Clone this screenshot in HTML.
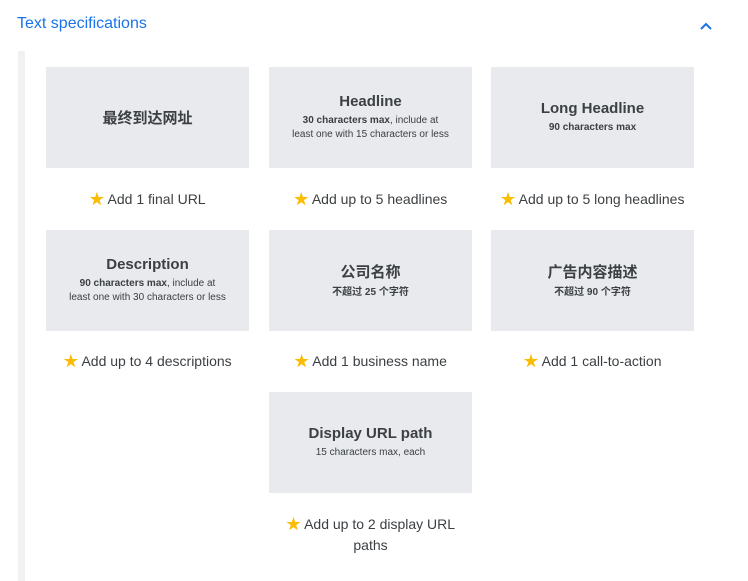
<!DOCTYPE html>
<html><head><meta charset="utf-8"><style>
body{margin:0;width:748px;height:569px;background:#fff;font-family:"Liberation Sans","Noto Sans CJK SC",sans-serif;color:#3c4043;position:relative;overflow:hidden}
.h{position:absolute;left:17px;top:15px;font-size:16px;color:#1a73e8}
.bar{position:absolute;left:18px;top:51px;width:7px;height:530px;background:#f1f1f1}
.box{position:absolute;width:203px;height:101px;background:#e8eaed;display:flex;flex-direction:column;justify-content:center;align-items:center;text-align:center}
.t{font-size:15px;font-weight:bold;color:#3c4043}
.s{font-size:10px;line-height:14px;margin-top:4px;color:#3c4043}
.cap{position:absolute;width:203px;text-align:center;font-size:14px;line-height:21px;color:#3c4043}
.st{color:#fbbc04;font-size:15px}
</style></head><body>
<div class="h">Text specifications</div>
<svg style="position:absolute;left:699px;top:21px" width="14" height="10" viewBox="0 0 14 10"><path d="M2 8 L7 3 L12 8" stroke="#1a73e8" stroke-width="2" fill="none"/></svg>
<div class="bar"></div>

<div class="box" style="left:46px;top:67px"><div class="t">最终到达网址</div></div>
<div class="box" style="left:269px;top:67px"><div class="t">Headline</div><div class="s"><b>30 characters max</b>, include at<br>least one with 15 characters or less</div></div>
<div class="box" style="left:491px;top:67px"><div class="t">Long Headline</div><div class="s"><b>90 characters max</b></div></div>
<div class="cap" style="left:46px;top:189px"><span class="st">★</span> Add 1 final URL</div>
<div class="cap" style="left:269px;top:189px"><span class="st">★</span> Add up to 5 headlines</div>
<div class="cap" style="left:491px;top:189px"><span class="st">★</span> Add up to 5 long headlines</div>

<div class="box" style="left:46px;top:230px"><div class="t">Description</div><div class="s"><b>90 characters max</b>, include at<br>least one with 30 characters or less</div></div>
<div class="box" style="left:269px;top:230px"><div class="t">公司名称</div><div class="s"><b>不超过 25 个字符</b></div></div>
<div class="box" style="left:491px;top:230px"><div class="t">广告内容描述</div><div class="s"><b>不超过 90 个字符</b></div></div>
<div class="cap" style="left:46px;top:351px"><span class="st">★</span> Add up to 4 descriptions</div>
<div class="cap" style="left:269px;top:351px"><span class="st">★</span> Add 1 business name</div>
<div class="cap" style="left:491px;top:351px"><span class="st">★</span> Add 1 call-to-action</div>

<div class="box" style="left:269px;top:392px"><div class="t">Display URL path</div><div class="s">15 characters max, each</div></div>
<div class="cap" style="left:269px;top:514px"><span class="st">★</span> Add up to 2 display URL<br>paths</div>
</body></html>
